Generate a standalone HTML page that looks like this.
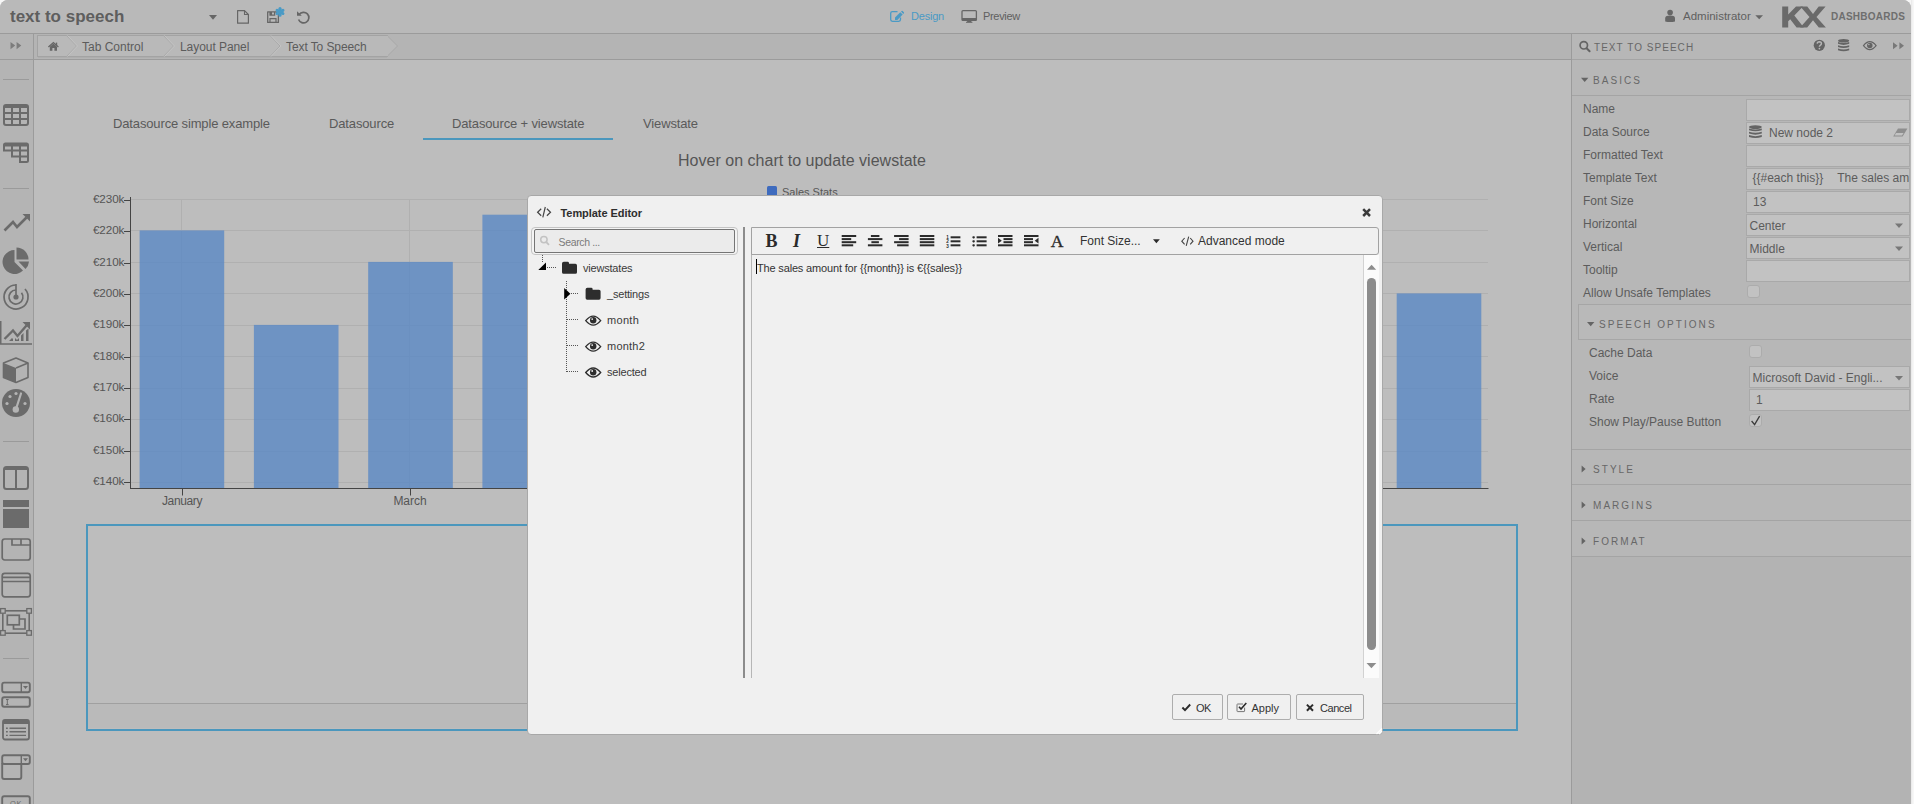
<!DOCTYPE html>
<html>
<head>
<meta charset="utf-8">
<title>text to speech</title>
<style>
*{box-sizing:border-box;margin:0;padding:0}
html,body{width:1914px;height:804px;overflow:hidden;background:#f7f7f7;font-family:"Liberation Sans",sans-serif;color:#5a5a5a}
#app{position:absolute;left:0;top:0;width:1911px;height:804px;background:#bdbdbd;border-radius:8px 8px 0 0;overflow:hidden}
#edge1{position:absolute;left:1911px;top:0;width:1px;height:804px;background:#ebebeb}
#edge2{position:absolute;left:1912px;top:0;width:1px;height:804px;background:#f3f3f3}
.abs{position:absolute}
/* top bar */
#topbar{position:absolute;left:0;top:0;width:1911px;height:33px;background:#b9b9b9}
#topline{position:absolute;left:0;top:33px;width:1911px;height:1px;background:#9b9b9b}
#title{position:absolute;left:10px;top:7px;font-size:17px;font-weight:bold;color:#5e5e5e;line-height:20px;white-space:nowrap}
.t{position:absolute;white-space:nowrap;line-height:1}
/* sidebar */
#sidebar{position:absolute;left:0;top:34px;width:33px;height:770px;background:#b4b4b4}
#sideline{position:absolute;left:33px;top:34px;width:1px;height:770px;background:#9b9b9b}
.sep{position:absolute;left:3px;width:26px;height:1px;background:#9d9d9d}
/* breadcrumb */
#crumbbar{position:absolute;left:34px;top:34px;width:1537px;height:25px;background:#b4b4b4}
#crumbline{position:absolute;left:0;top:59px;width:1571px;height:1px;background:#9b9b9b}
/* right panel */
#rpanel{position:absolute;left:1572px;top:34px;width:339px;height:770px;background:#b3b3b3}
#rsec{position:absolute;left:1572px;top:34px;width:339px;height:522px;background:#b7b7b7}
#rline{position:absolute;left:1571px;top:34px;width:1px;height:770px;background:#9b9b9b}
.hl{position:absolute;height:1px;background:#a4a4a4}
.lbl{position:absolute;left:1583px;font-size:12px;color:#5c5c5c;white-space:nowrap;line-height:14px}
.inp{position:absolute;left:1746px;width:164px;height:22px;background:#c2c2c2;border:1px solid #a9a9a9;font-size:12px;color:#5c5c5c;line-height:20px;white-space:nowrap;overflow:hidden}
.sec{position:absolute;font-size:10px;color:#676767;white-space:nowrap;line-height:12px}
.cb{position:absolute;width:13px;height:13px;background:#c2c2c2;border:1px solid #acacac;border-radius:3px}
/* modal */
#modal{position:absolute;left:527px;top:195px;width:856px;height:540px;background:#f0f0f0;border:1px solid #a8a8a8;border-radius:4px}
.btn{position:absolute;top:694px;height:26px;border:1px solid #adadad;border-radius:2px;background:#f0f0f0;font-size:11px;color:#333}
</style>
</head>
<body>
<div id="edge1"></div><div id="edge2"></div>
<div id="app">
<!-- CANVAS -->
<div id="canvas">
<div class="t" style="left:113px;top:117px;font-size:13px;letter-spacing:-0.14px;color:#5a5a5a" id="tab1">Datasource simple example</div>
<div class="t" style="left:329px;top:117px;font-size:13px;letter-spacing:-0.14px;color:#5a5a5a" id="tab2">Datasource</div>
<div class="t" style="left:452px;top:117px;font-size:13px;letter-spacing:-0.14px;color:#5a5a5a" id="tab3">Datasource + viewstate</div>
<div class="t" style="left:643px;top:117px;font-size:13px;letter-spacing:-0.14px;color:#5a5a5a" id="tab4">Viewstate</div>
<div class="abs" style="left:423px;top:138px;width:190px;height:2px;background:#4b97bd"></div>
<div class="t" style="left:678px;top:153px;font-size:16px;letter-spacing:0.02px;color:#555" id="ctitle">Hover on chart to update viewstate</div>
<div class="abs" style="left:767px;top:185.7px;width:10px;height:11px;background:#3e6bbe;border-radius:1.5px"></div>
<div class="t" style="left:782px;top:187px;font-size:11px;color:#555" id="legend">Sales Stats</div>
<svg class="abs" style="left:0;top:0" width="1571" height="804" font-family="Liberation Sans, sans-serif">
<line x1="131" x2="1488" y1="482.5" y2="482.5" stroke="#b0b0b0" stroke-width="1"/>
<line x1="131" x2="1488" y1="451.5" y2="451.5" stroke="#b0b0b0" stroke-width="1"/>
<line x1="131" x2="1488" y1="419.5" y2="419.5" stroke="#b0b0b0" stroke-width="1"/>
<line x1="131" x2="1488" y1="388.5" y2="388.5" stroke="#b0b0b0" stroke-width="1"/>
<line x1="131" x2="1488" y1="356.5" y2="356.5" stroke="#b0b0b0" stroke-width="1"/>
<line x1="131" x2="1488" y1="325.5" y2="325.5" stroke="#b0b0b0" stroke-width="1"/>
<line x1="131" x2="1488" y1="293.5" y2="293.5" stroke="#b0b0b0" stroke-width="1"/>
<line x1="131" x2="1488" y1="262.5" y2="262.5" stroke="#b0b0b0" stroke-width="1"/>
<line x1="131" x2="1488" y1="230.5" y2="230.5" stroke="#b0b0b0" stroke-width="1"/>
<line x1="131" x2="1488" y1="199.5" y2="199.5" stroke="#b0b0b0" stroke-width="1"/>
<line x1="181.5" x2="181.5" y1="199" y2="488" stroke="#b0b0b0" stroke-width="1"/>
<line x1="409.5" x2="409.5" y1="199" y2="488" stroke="#b0b0b0" stroke-width="1"/>
<line x1="637.5" x2="637.5" y1="199" y2="488" stroke="#b0b0b0" stroke-width="1"/>
<line x1="866.5" x2="866.5" y1="199" y2="488" stroke="#b0b0b0" stroke-width="1"/>
<line x1="1094.5" x2="1094.5" y1="199" y2="488" stroke="#b0b0b0" stroke-width="1"/>
<line x1="1322.5" x2="1322.5" y1="199" y2="488" stroke="#b0b0b0" stroke-width="1"/>
<rect x="139.6" y="230.4" width="84.6" height="257.9" fill="#5a88c4" fill-opacity="0.8"/>
<rect x="253.9" y="324.9" width="84.6" height="163.4" fill="#5a88c4" fill-opacity="0.8"/>
<rect x="368.2" y="261.9" width="84.6" height="226.4" fill="#5a88c4" fill-opacity="0.8"/>
<rect x="482.4" y="214.7" width="84.6" height="273.6" fill="#5a88c4" fill-opacity="0.8"/>
<rect x="1396.7" y="293.4" width="84.6" height="194.9" fill="#5a88c4" fill-opacity="0.8"/>
<line x1="130.5" x2="130.5" y1="197" y2="489" stroke="#444" stroke-width="1"/>
<line x1="130" x2="1488.5" y1="488.5" y2="488.5" stroke="#444" stroke-width="1"/>
<line x1="124" x2="130" y1="482.5" y2="482.5" stroke="#444" stroke-width="1"/>
<text x="124.3" y="484.5" text-anchor="end" font-size="11.7" letter-spacing="-0.1" fill="#555">€140k</text>
<line x1="124" x2="130" y1="451.5" y2="451.5" stroke="#444" stroke-width="1"/>
<text x="124.3" y="453.5" text-anchor="end" font-size="11.7" letter-spacing="-0.1" fill="#555">€150k</text>
<line x1="124" x2="130" y1="419.5" y2="419.5" stroke="#444" stroke-width="1"/>
<text x="124.3" y="421.5" text-anchor="end" font-size="11.7" letter-spacing="-0.1" fill="#555">€160k</text>
<line x1="124" x2="130" y1="388.5" y2="388.5" stroke="#444" stroke-width="1"/>
<text x="124.3" y="390.5" text-anchor="end" font-size="11.7" letter-spacing="-0.1" fill="#555">€170k</text>
<line x1="124" x2="130" y1="357.5" y2="357.5" stroke="#444" stroke-width="1"/>
<text x="124.3" y="359.5" text-anchor="end" font-size="11.7" letter-spacing="-0.1" fill="#555">€180k</text>
<line x1="124" x2="130" y1="325.5" y2="325.5" stroke="#444" stroke-width="1"/>
<text x="124.3" y="327.5" text-anchor="end" font-size="11.7" letter-spacing="-0.1" fill="#555">€190k</text>
<line x1="124" x2="130" y1="294.5" y2="294.5" stroke="#444" stroke-width="1"/>
<text x="124.3" y="296.5" text-anchor="end" font-size="11.7" letter-spacing="-0.1" fill="#555">€200k</text>
<line x1="124" x2="130" y1="263.5" y2="263.5" stroke="#444" stroke-width="1"/>
<text x="124.3" y="265.5" text-anchor="end" font-size="11.7" letter-spacing="-0.1" fill="#555">€210k</text>
<line x1="124" x2="130" y1="231.5" y2="231.5" stroke="#444" stroke-width="1"/>
<text x="124.3" y="233.5" text-anchor="end" font-size="11.7" letter-spacing="-0.1" fill="#555">€220k</text>
<line x1="124" x2="130" y1="200.5" y2="200.5" stroke="#444" stroke-width="1"/>
<text x="124.3" y="202.5" text-anchor="end" font-size="11.7" letter-spacing="-0.1" fill="#555">€230k</text>
<line x1="182.5" x2="182.5" y1="489" y2="495.5" stroke="#444" stroke-width="1"/>
<text x="182.0" y="505" text-anchor="middle" font-size="12" letter-spacing="-0.38" fill="#555">January</text>
<line x1="410.5" x2="410.5" y1="489" y2="495.5" stroke="#444" stroke-width="1"/>
<text x="410.0" y="505" text-anchor="middle" font-size="12" letter-spacing="-0.03" fill="#555">March</text>
</svg>
<div class="abs" style="left:88px;top:704px;width:1428px;height:24px;background:#bababa"></div>
<div class="abs" style="left:88px;top:703px;width:1428px;height:1px;background:#a0a0a0"></div>
<div class="abs" style="left:86px;top:524px;width:1432px;height:207px;border:2px solid #4b97bd"></div>
</div>
<!-- TOPBAR -->
<div id="topbar"></div>
<div id="topline"></div>
<div id="title">text to speech</div>
<!-- SIDEBAR -->
<div id="sidebar"></div>
<div id="sideline"></div>
<svg class="abs" style="left:0;top:0" width="34" height="804" fill="none" stroke="none">
<path d="M10.5 42 L15.2 45.6 L10.5 49.2 Z M16.6 42 L21.3 45.6 L16.6 49.2 Z" fill="#7c7c7c"/>
<rect x="3" y="79" width="26" height="1" fill="#9a9a9a"/>
<rect x="3" y="188" width="26" height="1" fill="#9a9a9a"/>
<rect x="3" y="441" width="26" height="1" fill="#9a9a9a"/>
<rect x="3" y="658" width="26" height="1" fill="#9a9a9a"/>
<rect x="4" y="105" width="24" height="20" rx="2" stroke="#6b6b6b" stroke-width="2"/>
<rect x="4" y="105" width="24" height="3" fill="#6b6b6b"/>
<path d="M4 113H28 M4 119H28 M12 107V125 M20 107V125" stroke="#6b6b6b" stroke-width="2"/>
<path d="M4 150.5 V145 Q4 143.5 5.5 143.5 H26.5 Q28 143.5 28 145 V160.5 Q28 162 26.5 162 H20 V156.5 H12 V150.5 Z" stroke="#6b6b6b" stroke-width="2"/>
<rect x="4" y="143" width="24" height="3.5" fill="#6b6b6b"/>
<path d="M12 145V151 M20 145V157 M12 150.5H28 M20 156.5H28" stroke="#6b6b6b" stroke-width="2"/>
<path d="M4.5 230.5 L13 222 L17 227 L26.5 217.5" stroke="#6b6b6b" stroke-width="2.6" stroke-linejoin="miter"/>
<path d="M22.5 214 H30 V221.5 Z" fill="#6b6b6b"/>
<path d="M14.5 250 A12 12 0 1 0 23 270.5 L14.5 262 Z" fill="#6b6b6b"/>
<path d="M16.5 247.5 A12 12 0 0 1 28.5 259.5 L16.5 259.5 Z" fill="#6b6b6b"/>
<path d="M18.5 261.5 H29 A12 12 0 0 1 25.5 269 Z" fill="#6b6b6b"/>
<path d="M16 285 A12 12 0 1 0 25 289" stroke="#6b6b6b" stroke-width="1.7"/>
<path d="M16 290 A7 7 0 1 0 21.5 292.7" stroke="#6b6b6b" stroke-width="1.7"/>
<circle cx="16" cy="297" r="2.6" fill="#6b6b6b"/>
<path d="M16 284 V297" stroke="#6b6b6b" stroke-width="1.7"/>
<path d="M0.7 321 V344 H32" stroke="#6b6b6b" stroke-width="1.6"/>
<path d="M4.5 339 L13 330.5 L17.5 336 L26.5 325.5" stroke="#6b6b6b" stroke-width="2.4"/>
<path d="M22.5 322 H30 V329.5 Z" fill="#6b6b6b"/>
<path d="M9 341 L12 338 L13 339 V341 Z M15 341 V338 L17 340 L19 338 V341 Z M21 341 V335.5 L23.5 333 V341 Z M26 341 V330.5 L28.5 328.5 V341 Z" fill="#6b6b6b"/>
<path d="M3.5 363 L16 358 L28 363 V377.5 L16 382.5 L3.5 377.5 Z" stroke="#6b6b6b" stroke-width="1.6" stroke-linejoin="round"/>
<path d="M3.5 363 L16 368 V382.5 L3.5 377.5 Z" fill="#6b6b6b"/>
<path d="M16 368 L28 363" stroke="#6b6b6b" stroke-width="1.6"/>
<circle cx="16" cy="403" r="14" fill="#6b6b6b"/>
<path d="M16 409 L21 393.5" stroke="#b4b4b4" stroke-width="2.2" stroke-linecap="round"/>
<circle cx="15.8" cy="409.5" r="3.2" fill="#b4b4b4"/>
<circle cx="7" cy="403.5" r="1.6" fill="#b4b4b4"/>
<circle cx="10" cy="396.5" r="1.6" fill="#b4b4b4"/>
<circle cx="16" cy="393.5" r="1.6" fill="#b4b4b4"/>
<circle cx="25" cy="403.5" r="1.6" fill="#b4b4b4"/>
<rect x="4" y="467" width="24" height="22" rx="2.5" stroke="#6b6b6b" stroke-width="2"/>
<rect x="4" y="467" width="24" height="3" fill="#6b6b6b"/>
<path d="M16 468V489" stroke="#6b6b6b" stroke-width="2"/>
<rect x="3" y="500" width="26" height="7" fill="#6b6b6b"/>
<rect x="3" y="509" width="26" height="19" fill="#6b6b6b"/>
<rect x="2.2" y="539" width="28" height="21" rx="2.5" stroke="#6b6b6b" stroke-width="1.7"/>
<path d="M12 539 V545 H30.5 M21 539 V545" stroke="#6b6b6b" stroke-width="1.7"/>
<rect x="2.2" y="573.3" width="28" height="23.5" rx="2.5" stroke="#6b6b6b" stroke-width="1.7"/>
<path d="M2 577.3 H30.5 M2 581.5 H30.5" stroke="#6b6b6b" stroke-width="1.7"/>
<rect x="2.8" y="610.8" width="26.4" height="22.4" stroke="#6b6b6b" stroke-width="1.6"/>
<rect x="0.6" y="608.6" width="4.6" height="4.6" fill="#b4b4b4" stroke="#6b6b6b" stroke-width="1.3"/>
<rect x="26.8" y="608.6" width="4.6" height="4.6" fill="#b4b4b4" stroke="#6b6b6b" stroke-width="1.3"/>
<rect x="0.6" y="630.6" width="4.6" height="4.6" fill="#b4b4b4" stroke="#6b6b6b" stroke-width="1.3"/>
<rect x="26.8" y="630.6" width="4.6" height="4.6" fill="#b4b4b4" stroke="#6b6b6b" stroke-width="1.3"/>
<path d="M19.5 619 H25 V629 H13.5 V625" stroke="#6b6b6b" stroke-width="1.7"/>
<rect x="7.3" y="615.3" width="12" height="9.5" stroke="#6b6b6b" stroke-width="1.7"/>
<rect x="2.2" y="682.6" width="27.6" height="9.6" rx="2" stroke="#6b6b6b" stroke-width="1.9"/>
<path d="M21.3 682.6 V692" stroke="#6b6b6b" stroke-width="1.4"/>
<path d="M23 686 H28 L25.5 689 Z" fill="#6b6b6b"/>
<rect x="2.2" y="697.2" width="27.6" height="9.6" rx="2" stroke="#6b6b6b" stroke-width="1.9"/>
<path d="M6 699.5 H8.6 M6 704.6 H8.6 M7.3 699.5 V704.6" stroke="#6b6b6b" stroke-width="1"/>
<rect x="3" y="720" width="26" height="19.5" rx="2" stroke="#6b6b6b" stroke-width="1.8"/>
<rect x="3" y="720" width="26" height="4" fill="#6b6b6b"/>
<path d="M9.5 728.2 H26 M9.5 731.8 H26 M9.5 735.4 H26" stroke="#6b6b6b" stroke-width="1.4"/>
<path d="M6 728.2 H7.8 M6 731.8 H7.8 M6 735.4 H7.8" stroke="#6b6b6b" stroke-width="1.4"/>
<rect x="2.2" y="755.2" width="27.6" height="8.8" rx="2" stroke="#6b6b6b" stroke-width="1.9"/>
<path d="M21.3 755 V764" stroke="#6b6b6b" stroke-width="1.4"/>
<path d="M23 758.2 H28 L25.5 761.2 Z" fill="#6b6b6b"/>
<path d="M2.2 763 V777 Q2.2 779 4.2 779 H19.3 Q21.3 779 21.3 777 V764" stroke="#6b6b6b" stroke-width="1.9"/>
<rect x="2.2" y="796.3" width="27.6" height="12" rx="2" stroke="#6b6b6b" stroke-width="1.9"/>
<text x="16" y="806" text-anchor="middle" font-family="Liberation Sans, sans-serif" font-size="7.5" fill="#6b6b6b" letter-spacing="0.5">OK</text>
</svg>
<!-- BREADCRUMB -->
<div id="crumbbar"></div>
<div id="crumbline"></div>
<svg class="abs" style="left:0;top:0" width="1911" height="60" fill="none">
<path d="M209 15 H217 L213 19.7 Z" fill="#666"/>
<path d="M237.6 10.6 H244.5 L248.4 14.5 V23.2 H237.6 Z" stroke="#666" stroke-width="1.2" stroke-linejoin="round"/>
<path d="M244.5 10.6 V14.5 H248.4" stroke="#666" stroke-width="1.1"/>
<path d="M267.7 11.8 H276 L278.4 14.2 V22.4 H267.7 Z" stroke="#666" stroke-width="1.3" stroke-linejoin="round"/>
<path d="M270 22 V18.6 H276 V22" stroke="#666" stroke-width="1.2"/>
<path d="M270 12 V15.2 H274.6 V12" stroke="#666" stroke-width="1.2"/>
<rect x="270" y="12" width="2" height="3" fill="#666"/>
<g stroke="#4a9ac5" stroke-width="3.1" stroke-linecap="round"><path d="M280 8.6 V15.2"/><path d="M277.1 10.3 L282.9 13.5"/><path d="M282.9 10.3 L277.1 13.5"/></g>
<path d="M299.2 14.6 A5.3 5.3 0 1 1 298.6 19.5" stroke="#666" stroke-width="1.7"/>
<path d="M297 11.2 V15.8 H301.8 Z" fill="#666"/>
<path d="M900.5 17.5 V19.6 Q900.5 21.3 898.8 21.3 H892.4 Q890.7 21.3 890.7 19.6 V13.3 Q890.7 11.6 892.4 11.6 H897.5" stroke="#4a9ac5" stroke-width="1.3"/>
<path d="M895 17.5 L900.3 12.2 L902.7 14.6 L897.4 19.9 H895 Z" fill="#4a9ac5"/>
<path d="M901 11.5 L901.6 10.9 Q902.1 10.5 902.6 11 L903.9 12.3 Q904.3 12.8 903.9 13.3 L903.3 13.9 Z" fill="#4a9ac5"/>
<rect x="962" y="10.6" width="14.4" height="9.8" rx="1" stroke="#666" stroke-width="1.3"/>
<rect x="962" y="18" width="14.4" height="2.4" fill="#666"/>
<path d="M967.5 20.4 H971 L971.6 22 H966.9 Z" fill="#666"/>
<rect x="966" y="21.8" width="6.4" height="1" fill="#666"/>
<circle cx="1670.1" cy="12.6" r="2.8" fill="#666"/>
<path d="M1665.2 21.5 V18.6 Q1665.2 15.8 1668 15.8 H1672.2 Q1675 15.8 1675 18.6 V21.5 Q1670.1 22.6 1665.2 21.5 Z" fill="#666"/>
<path d="M1755.3 15.3 H1763 L1759.2 19.2 Z" fill="#666"/>
<path d="M1782.2 6.4 H1788.2 V14.6 L1796 6.4 H1803 L1794.3 15.4 L1803.8 27.6 H1796.6 L1790.2 19.2 L1788.2 21.3 V27.6 H1782.2 Z" fill="#6a6a6a"/>
<path d="M1800.3 6.4 H1807.3 L1813 14 L1818.7 6.4 H1825.6 L1816.5 17 L1825.9 27.6 H1818.8 L1813 20.2 L1807.2 27.6 H1800.1 L1809.5 17 Z" fill="#6a6a6a"/>
<rect x="38" y="57" width="349" height="1" fill="#adadad"/><rect x="37.5" y="35.5" width="350" height="21" fill="#b9b9b9" stroke="#a3a3a3"/>
<path d="M387 35.5 L397.5 46 L387 56.5" fill="#b9b9b9" stroke="#a8a8a8"/>
<rect x="386" y="36" width="2" height="20" fill="#b9b9b9"/>
<path d="M66.5 35.5 L76.5 46 L66.5 56.5" stroke="#a9a9a9" stroke-width="1"/>
<path d="M67.5 35.5 L77.5 46 L67.5 56.5" stroke="#c4c4c4" stroke-width="1"/>
<path d="M163.5 35.5 L173.5 46 L163.5 56.5" stroke="#a9a9a9" stroke-width="1"/>
<path d="M164.5 35.5 L174.5 46 L164.5 56.5" stroke="#c4c4c4" stroke-width="1"/>
<path d="M270 35.5 L280 46 L270 56.5" stroke="#a9a9a9" stroke-width="1"/>
<path d="M271 35.5 L281 46 L271 56.5" stroke="#c4c4c4" stroke-width="1"/>
<path d="M48.4 46.9 L53.4 42.5 L58.4 46.9" stroke="#666" stroke-width="1.3"/>
<path d="M49.8 46.7 L53.4 43.6 L57 46.7 V50.8 H54.4 V48 H52.4 V50.8 H49.8 Z" fill="#666"/>
<rect x="55.8" y="42.6" width="1.4" height="2.6" fill="#666"/>
</svg>
<div class="t" style="left:911px;top:11px;font-size:11px;letter-spacing:-0.2px;color:#4a9ac5" id="tdesign">Design</div>
<div class="t" style="left:983px;top:11px;font-size:11px;letter-spacing:-0.33px;color:#606060" id="tpreview">Preview</div>
<div class="t" style="left:1683px;top:10.5px;font-size:11.5px;color:#606060" id="tadmin">Administrator</div>
<div class="t" style="left:1831px;top:12.3px;font-size:10px;font-weight:bold;color:#6e6e6e;letter-spacing:0.25px" id="tdash">DASHBOARDS</div>
<div class="t" style="left:82px;top:41px;font-size:12px;color:#5c5c5c" id="bc1">Tab Control</div>
<div class="t" style="left:180px;top:41px;font-size:12px;letter-spacing:-0.06px;color:#5c5c5c" id="bc2">Layout Panel</div>
<div class="t" style="left:286px;top:41px;font-size:12px;letter-spacing:-0.09px;color:#5c5c5c" id="bc3">Text To Speech</div>

<!-- RIGHT PANEL -->
<div id="rpanel"></div><div id="rsec"></div>
<div id="rline"></div>
<div class="hl" style="left:1572px;top:59px;width:339px"></div>
<div class="hl" style="left:1572px;top:95px;width:339px"></div>
<div class="sec" style="left:1594px;top:41.8px;font-size:10px;letter-spacing:1.04px" id="rh">TEXT TO SPEECH</div>
<div class="sec" style="left:1593px;top:74.5px;letter-spacing:2.05px" id="sb">BASICS</div>
<div class="lbl" style="top:102px">Name</div>
<div class="inp" style="top:99px"></div>
<div class="lbl" style="top:125px">Data Source</div>
<div class="inp" style="top:122px"><span style="margin-left:22px">New node 2</span></div>
<div class="lbl" style="top:148px">Formatted Text</div>
<div class="inp" style="top:145px"></div>
<div class="lbl" style="top:171px">Template Text</div>
<div class="inp" style="top:168px"><span style="margin-left:5.5px;position:relative;top:-1px">{{#each this}}</span><span style="margin-left:14px;position:relative;top:-1px">The sales am</span></div>
<div class="lbl" style="top:194px">Font Size</div>
<div class="inp" style="top:191px"><span style="margin-left:6px">13</span></div>
<div class="lbl" style="top:217px">Horizontal</div>
<div class="inp" style="top:214px"><span style="margin-left:2.5px;position:relative;top:1px">Center</span></div>
<div class="lbl" style="top:240px">Vertical</div>
<div class="inp" style="top:237px"><span style="margin-left:2.5px;position:relative;top:1px">Middle</span></div>
<div class="lbl" style="top:263px">Tooltip</div>
<div class="inp" style="top:260px"></div>
<div class="lbl" style="top:286px">Allow Unsafe Templates</div>
<div class="cb" style="left:1747px;top:285px"></div>
<div class="abs" style="left:1578px;top:304px;width:333px;height:36px;border:1px solid #a6a6a6;border-right:none;background:#b9b9b9"></div>
<div class="sec" style="left:1599px;top:319px;letter-spacing:2.05px" id="sso">SPEECH OPTIONS</div>
<div class="lbl" style="left:1589px;top:346px">Cache Data</div>
<div class="cb" style="left:1749px;top:345px"></div>
<div class="lbl" style="left:1589px;top:369px">Voice</div>
<div class="inp" style="left:1749px;width:161px;top:366px"><span style="margin-left:2.5px;position:relative;top:1px">Microsoft David - Engli...</span></div>
<div class="lbl" style="left:1589px;top:392px">Rate</div>
<div class="inp" style="left:1749px;width:161px;top:389px"><span style="margin-left:6px">1</span></div>
<div class="lbl" style="left:1589px;top:415px">Show Play/Pause Button</div>
<div class="cb" style="left:1749px;top:414px"></div>
<div class="hl" style="left:1572px;top:449px;width:339px"></div>
<div class="hl" style="left:1572px;top:484px;width:339px"></div>
<div class="hl" style="left:1572px;top:520px;width:339px"></div>
<div class="hl" style="left:1572px;top:556px;width:339px"></div>
<div class="sec" style="left:1593px;top:463.5px;letter-spacing:2.05px" id="sSTYLE">STYLE</div>
<div class="sec" style="left:1593px;top:499.5px;letter-spacing:2.05px" id="sMARGINS">MARGINS</div>
<div class="sec" style="left:1593px;top:535.5px;letter-spacing:2.05px" id="sFORMAT">FORMAT</div>
<svg class="abs" style="left:1572px;top:34px" width="339" height="770" viewBox="1572 34 339 770" fill="none">
<circle cx="1583.8" cy="45.3" r="3.7" stroke="#646464" stroke-width="1.7"/>
<path d="M1586.6 48.2 L1589.6 51.2" stroke="#646464" stroke-width="2" stroke-linecap="round"/>
<circle cx="1819.3" cy="45.3" r="5.6" fill="#646464"/>
<path d="M1817.2 43.6 Q1817.3 41.7 1819.4 41.7 Q1821.5 41.8 1821.4 43.6 Q1821.3 44.7 1820.2 45.3 Q1819.4 45.8 1819.4 46.8" stroke="#b7b7b7" stroke-width="1.5"/>
<circle cx="1819.4" cy="48.6" r="0.85" fill="#b7b7b7"/>
<ellipse cx="1843.6" cy="40.76" rx="5.6" ry="1.76" fill="#646464"/>
<path d="M1838 42.08 Q1843.6 44.16 1849.2 42.08 V43.84 Q1843.6 45.92 1838 43.84 Z" fill="#646464"/>
<path d="M1838 45.28 Q1843.6 47.36 1849.2 45.28 V47.04 Q1843.6 49.12 1838 47.04 Z" fill="#646464"/>
<path d="M1838 48.48 Q1843.6 50.56 1849.2 48.48 V50.24 Q1843.6 52.32 1838 50.24 Z" fill="#646464"/>
<path d="M1863.5 45.7 Q1869.8 37.72 1876.1 45.7 Q1869.8 53.68 1863.5 45.7 Z" stroke="#646464" stroke-width="1.2"/><circle cx="1869.8" cy="45.400000000000006" r="2.74" fill="#646464"/><circle cx="1868.8999999999999" cy="44.400000000000006" r="0.75" fill="#b7b7b7"/>
<path d="M1893 42.2 L1897.6 45.7 L1893 49.2 Z M1899.4 42.2 L1904 45.7 L1899.4 49.2 Z" fill="#787878"/>
<path d="M1581 77.7 H1588.4 L1584.7 82 Z" fill="#646464"/>
<path d="M1587 322 H1594.4 L1590.7 326.3 Z" fill="#646464"/>
<path d="M1581.6 465.4 L1585.6 469 L1581.6 472.6 Z" fill="#646464"/>
<path d="M1581.6 501.4 L1585.6 505 L1581.6 508.6 Z" fill="#646464"/>
<path d="M1581.6 537.4 L1585.6 541 L1581.6 544.6 Z" fill="#646464"/>
<ellipse cx="1755.4" cy="127.11" rx="6.4" ry="1.81" fill="#646464"/>
<path d="M1749 128.47 Q1755.4 130.61 1761.8 128.47 V130.28 Q1755.4 132.43 1749 130.28 Z" fill="#646464"/>
<path d="M1749 131.77 Q1755.4 133.91 1761.8 131.77 V133.59 Q1755.4 135.73 1749 133.59 Z" fill="#646464"/>
<path d="M1749 135.07 Q1755.4 137.21 1761.8 135.07 V136.88 Q1755.4 139.03 1749 136.88 Z" fill="#646464"/>
<path d="M1898 128.6 H1907.4 L1902.6 136.6 H1893.2 Z" fill="#8e8e8e"/>
<path d="M1896 133 H1903.6 L1902 135.6 H1894.6 Z" fill="#c2c2c2"/>
<path d="M1895 223.5 H1903 L1899 228 Z" fill="#777"/>
<path d="M1895 246.5 H1903 L1899 251 Z" fill="#777"/>
<path d="M1895 376 H1903 L1899 380.5 Z" fill="#777"/>
<path d="M1751.6 421 L1754.6 424.6 L1759.6 416.2" stroke="#3a3a3a" stroke-width="1.3"/>
</svg>
<!-- MODAL -->
<div id="modal"></div>
<div class="t" style="left:560.5px;top:208px;font-size:11px;letter-spacing:-0.06px;font-weight:bold;color:#2e2e2e" id="mtitle">Template Editor</div>
<div class="abs" style="left:531px;top:227px;width:207px;height:28px;border:1px solid #c4c4c4;border-radius:4px;background:#f4f4f4"></div>
<div class="abs" style="left:534px;top:229px;width:201px;height:24px;border:1px solid #757575;border-radius:2px;background:#ebebeb"></div>
<div class="t" style="left:558.5px;top:237px;font-size:10.5px;letter-spacing:-0.35px;color:#7a7a7a" id="msearch">Search ...</div>
<div class="t" style="left:583px;top:263px;font-size:11px;letter-spacing:-0.2px;color:#3a3a3a" id="tr_viewstates">viewstates</div>
<div class="t" style="left:607px;top:289px;font-size:11px;letter-spacing:-0.2px;color:#3a3a3a" id="tr__settings">_settings</div>
<div class="t" style="left:607px;top:315px;font-size:11px;letter-spacing:0.3px;color:#3a3a3a" id="tr_month">month</div>
<div class="t" style="left:607px;top:341px;font-size:11px;letter-spacing:0.23px;color:#3a3a3a" id="tr_month2">month2</div>
<div class="t" style="left:607px;top:367px;font-size:11px;letter-spacing:-0.19px;color:#3a3a3a" id="tr_selected">selected</div>
<div class="abs" style="left:743px;top:227px;width:2px;height:451px;background:#8c8c8c"></div>
<div class="abs" style="left:751px;top:250px;width:1px;height:428px;background:#b6b6b6"></div>
<div class="abs" style="left:751px;top:227px;width:628px;height:28px;border:1px solid #a2a2a2;border-radius:0 3px 3px 0;background:#f0f0f0"></div>
<div class="abs" style="left:1363px;top:255px;width:16px;height:423px;background:#fbfbfb;border-left:1px solid #d2d2d2"></div>
<div class="abs" style="left:1367px;top:278px;width:9px;height:372px;background:#8c8c8c;border-radius:4.5px"></div>
<div class="t" style="left:765.5px;top:232px;font-family:'Liberation Serif',serif;font-weight:bold;font-size:18px;color:#2b2b2b" id="tbB">B</div>
<div class="t" style="left:793px;top:232px;font-family:'Liberation Serif',serif;font-style:italic;font-weight:bold;font-size:18px;color:#2b2b2b" id="tbI">I</div>
<div class="t" style="left:817px;top:232px;font-family:'Liberation Serif',serif;font-size:17px;color:#2b2b2b;text-decoration:underline" id="tbU">U</div>
<div class="t" style="left:1050.8px;top:232.5px;font-family:'Liberation Serif',serif;font-size:17.6px;color:#2b2b2b;-webkit-text-stroke:0.35px #2b2b2b" id="tbA">A</div>
<div class="t" style="left:1080px;top:235px;font-size:12px;color:#333" id="tbfs">Font Size...</div>
<div class="t" style="left:1198px;top:235px;font-size:12px;color:#333" id="tbadv">Advanced mode</div>
<div class="t" style="left:757px;top:262.5px;font-size:11px;letter-spacing:-0.165px;color:#333" id="edtext">The sales amount for {{month}} is €{{sales}}</div>
<div class="abs" style="left:756px;top:259px;width:1px;height:15px;background:#000"></div>
<div class="btn" style="left:1172px;width:51px"></div>
<div class="btn" style="left:1227px;width:64px"></div>
<div class="btn" style="left:1296px;width:68px"></div>
<div class="t" style="left:1196px;top:702.5px;font-size:11px;letter-spacing:-0.5px;color:#333" id="bok">OK</div>
<div class="t" style="left:1251.5px;top:702.5px;font-size:11px;color:#333" id="bapply">Apply</div>
<div class="t" style="left:1320px;top:702.5px;font-size:11px;letter-spacing:-0.45px;color:#333" id="bcancel">Cancel</div>
<svg class="abs" style="left:527px;top:195px" width="856" height="540" viewBox="527 195 856 540" fill="none">
<path d="M541.2 208.8 L537.6 212.3 L541.2 215.8 M546.9 208.8 L550.5 212.3 L546.9 215.8 M545.3 207 L542.8 217.4" stroke="#444" stroke-width="1.2"/>
<path d="M1363.2 209.2 L1370 216 M1370 209.2 L1363.2 216" stroke="#3a3a3a" stroke-width="2.5"/>
<circle cx="543.9" cy="239.6" r="3.2" stroke="#c2c2c2" stroke-width="1.5"/><path d="M546.3 242.1 L549 244.8" stroke="#c2c2c2" stroke-width="1.8"/>
<path d="M542.5 255 V263" stroke="#555" stroke-width="1" stroke-dasharray="1 1"/>
<path d="M547 267.5 H556" stroke="#555" stroke-width="1" stroke-dasharray="1 1"/>
<path d="M566.5 281 V372" stroke="#555" stroke-width="1" stroke-dasharray="1 1"/>
<path d="M571 293.5 H579" stroke="#555" stroke-width="1" stroke-dasharray="1 1"/>
<path d="M567 319.5 H579" stroke="#555" stroke-width="1" stroke-dasharray="1 1"/>
<path d="M567 345.5 H579" stroke="#555" stroke-width="1" stroke-dasharray="1 1"/>
<path d="M567 371.5 H579" stroke="#555" stroke-width="1" stroke-dasharray="1 1"/>
<path d="M546 262.5 V270 H538.3 Z" fill="#000"/>
<path d="M564.2 288 L570.4 293.7 L564.2 299.4 Z" fill="#000"/>
<path d="M562 263.6 Q562 261.8 563.8 261.8 H567.6 Q569 261.8 569 263.2 V263.8 H575.4 Q577 263.8 577 265.40000000000003 V272.2 Q577 273.8 575.4 273.8 H563.6 Q562 273.8 562 272.2 Z" fill="#2d2d2d"/>
<path d="M585.6 289.5 Q585.6 287.7 587.4 287.7 H591.2 Q592.6 287.7 592.6 289.09999999999997 V289.7 H599.0 Q600.6 289.7 600.6 291.3 V298.09999999999997 Q600.6 299.7 599.0 299.7 H587.2 Q585.6 299.7 585.6 298.09999999999997 Z" fill="#2d2d2d"/>
<path d="M585.7 320.6 Q593.2 311.57 600.7 320.6 Q593.2 329.63 585.7 320.6 Z" stroke="#2d2d2d" stroke-width="1.3"/><circle cx="593.2" cy="320.3" r="3.2" fill="#2d2d2d"/><circle cx="592.2" cy="319.1" r="0.9" fill="#f0f0f0"/>
<path d="M585.7 346.6 Q593.2 337.57 600.7 346.6 Q593.2 355.63 585.7 346.6 Z" stroke="#2d2d2d" stroke-width="1.3"/><circle cx="593.2" cy="346.3" r="3.2" fill="#2d2d2d"/><circle cx="592.2" cy="345.1" r="0.9" fill="#f0f0f0"/>
<path d="M585.7 372.5 Q593.2 363.47 600.7 372.5 Q593.2 381.53 585.7 372.5 Z" stroke="#2d2d2d" stroke-width="1.3"/><circle cx="593.2" cy="372.2" r="3.2" fill="#2d2d2d"/><circle cx="592.2" cy="371.0" r="0.9" fill="#f0f0f0"/>
<rect x="841.7" y="235.0" width="14.5" height="2" fill="#2b2b2b"/><rect x="841.7" y="238.1" width="9.5" height="2" fill="#2b2b2b"/><rect x="841.7" y="241.2" width="14.5" height="2" fill="#2b2b2b"/><rect x="841.7" y="244.3" width="11.5" height="2" fill="#2b2b2b"/>
<rect x="870.9" y="235.0" width="8.5" height="2" fill="#2b2b2b"/><rect x="867.9" y="238.1" width="14.5" height="2" fill="#2b2b2b"/><rect x="871.4" y="241.2" width="7.5" height="2" fill="#2b2b2b"/><rect x="867.9" y="244.3" width="14.5" height="2" fill="#2b2b2b"/>
<rect x="894.1" y="235.0" width="14.5" height="2" fill="#2b2b2b"/><rect x="899.1" y="238.1" width="9.5" height="2" fill="#2b2b2b"/><rect x="894.1" y="241.2" width="14.5" height="2" fill="#2b2b2b"/><rect x="897.1" y="244.3" width="11.5" height="2" fill="#2b2b2b"/>
<rect x="919.8" y="235.0" width="14.5" height="2" fill="#2b2b2b"/><rect x="919.8" y="238.1" width="14.5" height="2" fill="#2b2b2b"/><rect x="919.8" y="241.2" width="14.5" height="2" fill="#2b2b2b"/><rect x="919.8" y="244.3" width="14.5" height="2" fill="#2b2b2b"/>
<rect x="950.6" y="236.3" width="9.8" height="2" fill="#2b2b2b"/>
<rect x="950.6" y="240.3" width="9.8" height="2" fill="#2b2b2b"/>
<rect x="950.6" y="244.3" width="9.8" height="2" fill="#2b2b2b"/>
<text x="946.3" y="239" font-family="Liberation Sans, sans-serif" font-size="4.6" font-weight="bold" fill="#2b2b2b">1</text><text x="946.3" y="243.4" font-family="Liberation Sans, sans-serif" font-size="4.6" font-weight="bold" fill="#2b2b2b">2</text><text x="946.3" y="247.6" font-family="Liberation Sans, sans-serif" font-size="4.6" font-weight="bold" fill="#2b2b2b">3</text>
<rect x="976.6" y="236.3" width="10" height="2" fill="#2b2b2b"/>
<rect x="972.4" y="236.20000000000002" width="2.4" height="2.2" rx="0.8" fill="#2b2b2b"/>
<rect x="976.6" y="240.3" width="10" height="2" fill="#2b2b2b"/>
<rect x="972.4" y="240.20000000000002" width="2.4" height="2.2" rx="0.8" fill="#2b2b2b"/>
<rect x="976.6" y="244.3" width="10" height="2" fill="#2b2b2b"/>
<rect x="972.4" y="244.20000000000002" width="2.4" height="2.2" rx="0.8" fill="#2b2b2b"/>
<rect x="998" y="235" width="14.5" height="2" fill="#2b2b2b"/><rect x="998" y="244.3" width="14.5" height="2" fill="#2b2b2b"/><rect x="1003.5" y="238.1" width="9" height="2" fill="#2b2b2b"/><rect x="1003.5" y="241.2" width="9" height="2" fill="#2b2b2b"/><path d="M998 237.8 L1001.8 240.7 L998 243.6 Z" fill="#2b2b2b"/>
<rect x="1024" y="235" width="14.5" height="2" fill="#2b2b2b"/><rect x="1024" y="244.3" width="14.5" height="2" fill="#2b2b2b"/><rect x="1024" y="238.1" width="9" height="2" fill="#2b2b2b"/><rect x="1024" y="241.2" width="9" height="2" fill="#2b2b2b"/><path d="M1038.5 237.8 L1034.7 240.7 L1038.5 243.6 Z" fill="#2b2b2b"/>
<path d="M1153 239.2 H1159.8 L1156.4 243.2 Z" fill="#2b2b2b"/>
<path d="M1184.6 238 L1181.8 241.2 L1184.6 244.4 M1190.2 238 L1193 241.2 L1190.2 244.4 M1188.7 236.6 L1186.2 245.8" stroke="#444" stroke-width="1.1"/>
<path d="M1367 269.8 L1371.6 264.8 L1376.2 269.8 Z" fill="#8c8c8c"/>
<path d="M1366.5 663 L1371.4 668.2 L1376.3 663 Z" fill="#8c8c8c"/>
<path d="M1182.4 707.5 L1185 710.2 L1190.2 704.5" stroke="#2b2b2b" stroke-width="1.9"/>
<path d="M1244.6 707.6 V711 Q1244.6 711.6 1244 711.6 H1237.6 Q1237 711.6 1237 711 V704.6 Q1237 704 1237.6 704 H1243" stroke="#777" stroke-width="1"/>
<path d="M1239 706.8 L1241 709 L1246.3 703" stroke="#2b2b2b" stroke-width="1.6"/>
<path d="M1306.9 704.6 L1313 710.7 M1313 704.6 L1306.9 710.7" stroke="#2b2b2b" stroke-width="2"/>
<path d="M1376.5 734 L1382 728.5 M1379 734 L1382 731" stroke="#fff" stroke-width="1.2"/>
</svg>
</div>
</body>
</html>
